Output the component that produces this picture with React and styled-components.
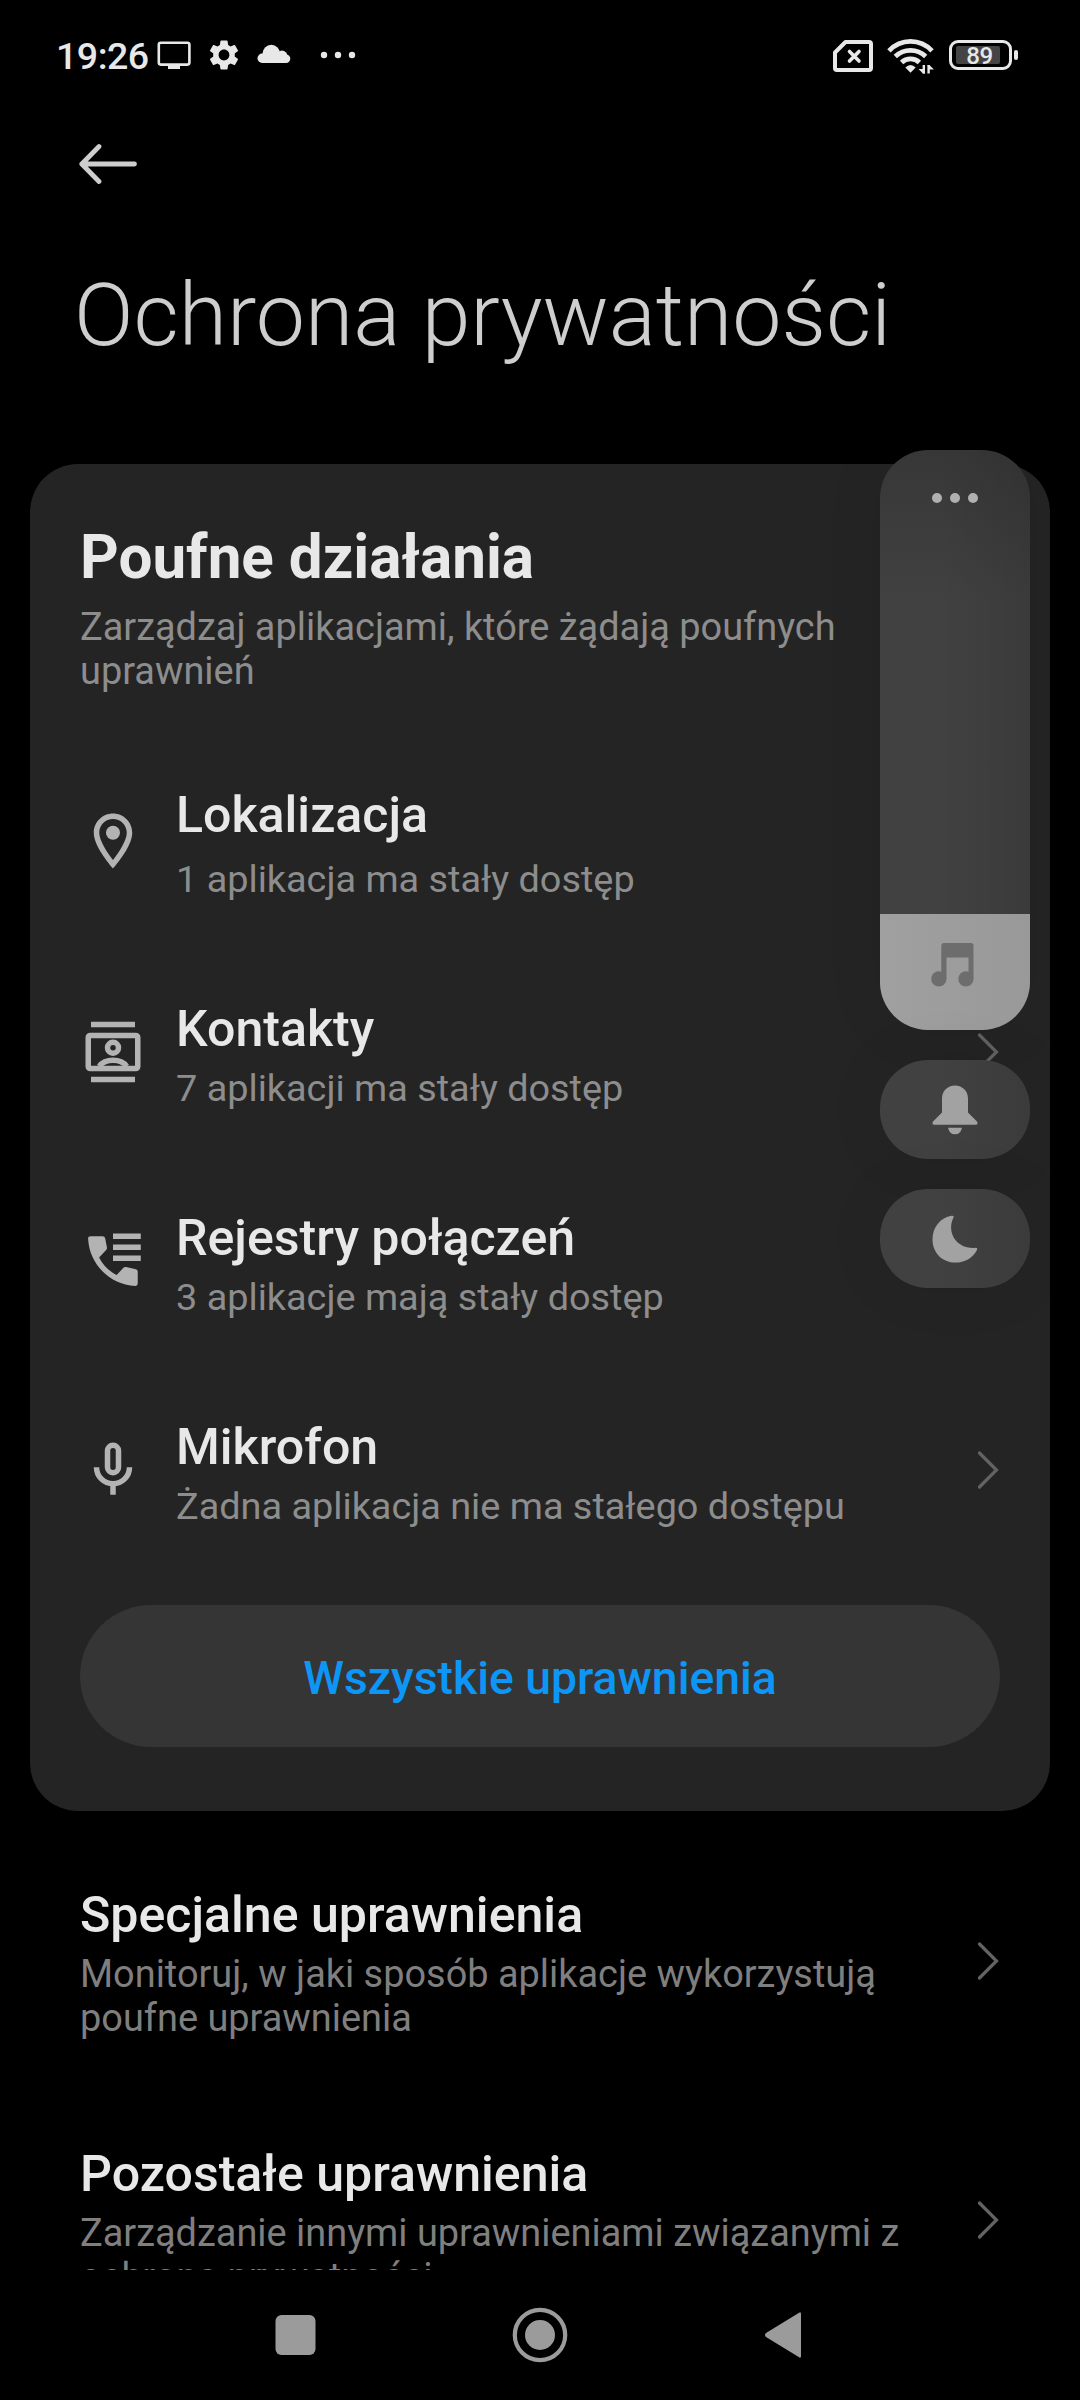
import React from 'react'
import styled, { createGlobalStyle } from 'styled-components'
import { MdSettings } from 'react-icons/md'


const rows = [
  { icon: 'pin', title: 'Lokalizacja', text: '1 aplikacja ma stały dostęp', first: true },
  { icon: 'contacts', title: 'Kontakty', text: '7 aplikacji ma stały dostęp' },
  { icon: 'calls', title: 'Rejestry połączeń', text: '3 aplikacje mają stały dostęp' },
  { icon: 'mic', title: 'Mikrofon', text: 'Żadna aplikacja nie ma stałego dostępu' },
]

const icons = {
  pin: (
    <>
      <path d="M12 2C8.13 2 5 5.13 5 9c0 5.25 7 13 7 13s7-7.75 7-13c0-3.87-3.13-7-7-7zM7 9c0-2.76 2.24-5 5-5s5 2.24 5 5c0 2.88-2.88 7.19-5 9.88C9.92 16.21 7 11.85 7 9z" />
      <circle cx="12" cy="9" r="2.55" />
    </>
  ),
  contacts: (
    <>
      <path d="M4 1h16v2H4zM4 21h16v2H4z" />
      <rect x="3" y="6" width="18" height="12" rx="0.7" fill="none" stroke="currentColor" strokeWidth="2" />
      <circle cx="12" cy="10.45" r="2" fill="none" stroke="currentColor" strokeWidth="2" />
      <path d="M7 17.2C8.2 15.6 10 15 12 15s3.8.6 5 2.2" fill="none" stroke="currentColor" strokeWidth="2" />
    </>
  ),
  calls: (
    <>
      <path d="M12 2h10.1v2H12zM12 6h10.1v2H12zM12 10h10.1v2H12z" />
      <path d="M3.9 3H8.2Q9 3 9.15 3.7L9.8 7.1Q9.9 7.6 9.5 8L6.95 10.7Q9.1 14.9 13.3 17.1L15.9 14.4Q16.3 14.1 16.8 14.2L20.3 15Q21 15.1 21 15.9V20.1Q21 21.1 20.1 21.05C10.8 20.6 3.4 13.2 2.95 3.95Q2.9 3 3.9 3Z" />
    </>
  ),
  mic: (
    <g fill="none" stroke="currentColor" strokeWidth="2">
      <rect x="10" y="3" width="4" height="10" rx="2" />
      <path d="M6 11a6 6 0 0 0 12 0M12 17v4" />
    </g>
  ),
}

function Chevron() {
  return (
    <ChevronIcon viewBox="0 0 22 38">
      <path d="M1.5 2L18.5 19L1.5 36" fill="none" stroke="currentColor" strokeWidth="3.2" strokeLinecap="round" />
    </ChevronIcon>
  )
}

export default function App() {
  return (
    <Screen>
      <GlobalStyle />

      <StatusBar>
        <Clock>19:26</Clock>
        <LeftIcons viewBox="0 0 200 40" fill="currentColor">
          <rect x="2.8" y="7.8" width="30.6" height="21.8" rx="2" fill="none" stroke="currentColor" strokeWidth="2.6" />
          <path d="M12 30h12v4H12z" />
          <MdSettings x="50" y="2" size={36} />
          <circle cx="115.3" cy="18.6" r="8.8" />
          <circle cx="126" cy="21" r="5.4" />
          <rect x="101.5" y="18.6" width="12" height="9.4" rx="4.7" />
          <rect x="104" y="19.5" width="30.3" height="8.5" rx="4.2" />
          <circle cx="168" cy="20" r="3.2" />
          <circle cx="182" cy="20" r="3.2" />
          <circle cx="196" cy="20" r="3.2" />
        </LeftIcons>

        <RightIcons>
          <svg width="40" height="32" viewBox="0 0 40 32" fill="none" stroke="currentColor">
            <path d="M12.5 2H36Q38 2 38 4V28Q38 30 36 30H4Q2 30 2 28V12.5Z" strokeWidth="4" strokeLinejoin="round" />
            <path d="M16.5 11.5l9.5 9.5M26 11.5l-9.5 9.5" strokeWidth="3.6" strokeLinecap="round" />
          </svg>
          <svg width="47" height="36" viewBox="0 0 47 36" fill="none" stroke="currentColor">
            <path d="M2 12.8C14 .3 33 .3 45 12.8M8.3 18.6C17 10.4 30 10.4 38.7 18.6M14.6 24.4C19.5 19.8 27.5 19.8 32.4 24.4" strokeWidth="4.8" />
            <path d="M23.5 34.8l-5.2-5.3q5.2-5 10.4 0z" fill="currentColor" stroke="none" />
            <path d="M36.8 27v8.5M41.6 27v8.5" strokeWidth="2.4" />
            <path d="M38 35.5h-2l-4.5-4.5h4.5zM40.4 27h2l4.5 4.5h-4.5z" fill="currentColor" stroke="none" />
          </svg>
          <Battery>
            <Level>89</Level>
          </Battery>
          <BatteryTip />
        </RightIcons>
      </StatusBar>

      <TopBar>
        <svg width="58" height="42" viewBox="0 0 58 42" fill="none" stroke="currentColor" strokeWidth="4.8" strokeLinecap="round" strokeLinejoin="round">
          <path d="M55.5 21H3M20 3.5L2.8 21L20 38.5" />
        </svg>
      </TopBar>
      <PageTitle>Ochrona prywatności</PageTitle>

      <Content>
        <Card>
          <CardTitle>Poufne działania</CardTitle>
          <CardText>Zarządzaj aplikacjami, które żądają poufnych uprawnień</CardText>

          {rows.map((r) => (
            <Row key={r.title} $first={r.first}>
              <RowIcon viewBox="0 0 24 24">{icons[r.icon]}</RowIcon>
              <Texts $first={r.first}>
                <RowTitle>{r.title}</RowTitle>
                <RowText>{r.text}</RowText>
              </Texts>
              <Chevron />
            </Row>
          ))}

          <AllButton>Wszystkie uprawnienia</AllButton>
        </Card>

        <Item>
          <Texts $first={false}>
            <RowTitle>Specjalne uprawnienia</RowTitle>
            <RowText $dim>Monitoruj, w jaki sposób aplikacje wykorzystują<br />poufne uprawnienia</RowText>
          </Texts>
          <Chevron />
        </Item>
        <Item>
          <Texts $first={false}>
            <RowTitle>Pozostałe uprawnienia</RowTitle>
            <RowText $dim>Zarządzanie innymi uprawnieniami związanymi z<br />ochroną prywatności</RowText>
          </Texts>
          <Chevron />
        </Item>
      </Content>

      <NavBar>
        <svg width="42" height="42" viewBox="0 0 42 42"><rect x="1.5" y="1" width="40" height="40" rx="6" /></svg>
        <svg width="56" height="56" viewBox="0 0 56 56">
          <circle cx="28" cy="28" r="25.2" fill="none" stroke="currentColor" strokeWidth="4.2" />
          <circle cx="28" cy="28" r="15" />
        </svg>
        <svg width="38" height="48" viewBox="0 0 38 48">
          <path d="M35.5 1.5Q37 .5 37 3V45Q37 47.5 35.5 46.5L2 26Q0 24 2 22Z" />
        </svg>
      </NavBar>

      {/* volume overlay */}
      <VolumePanel>
        <Slider>
          <Dots><i /><i /><i /></Dots>
          <Filled>
            <svg width="44" height="44" viewBox="0 0 44 44">
              <path d="M12.5 0H40Q42.5 0 42.5 2.5V36H37.5V14.5H15.5V36H10.3V2.5Q10.3 0 12.5 0Z" />
              <circle cx="7.8" cy="35.9" r="7.6" />
              <circle cx="34.9" cy="35.9" r="7.6" />
            </svg>
          </Filled>
        </Slider>
        <Pill>
          <svg width="46" height="50" viewBox="0 0 46 50">
            <path d="M23 .5C30.5 .5 36 6 36 13.5V27.5L45 36.5Q46.5 39.5 44 39.8H2Q-.5 39.5 1 36.5L10 27.5V13.5C10 6 15.5 .5 23 .5Z" />
            <path d="M16 42.7H30Q28.5 49.3 23 49.3T16 42.7Z" />
          </svg>
        </Pill>
        <Pill>
          <svg width="46" height="48" viewBox="0 0 46 48">
            <path d="M19.5 .7Q22.5 .3 21.3 3C14.5 17 24 33.5 42 33Q46 31.7 45 35C40.5 43.5 32.5 47.6 23.5 47.6C10 47.6 .5 37.5 .5 24.5C.5 12 8.5 2.5 19.5 .7Z" />
          </svg>
        </Pill>
      </VolumePanel>
    </Screen>
  )
}


const GlobalStyle = createGlobalStyle`
  body {
    margin: 0;
    background: #000;
  }
  * {
    box-sizing: border-box;
  }
`

const Screen = styled.div`
  position: relative;
  display: flex;
  flex-direction: column;
  width: 1080px;
  height: 2400px;
  overflow: hidden;
  background: #000;
  color: #e8e8e8;
  font-family: Roboto, "Noto Sans", sans-serif;
`

const StatusBar = styled.header`
  display: flex;
  align-items: center;
  height: 110px;
  padding: 0 62px 0 56px;
`

const Clock = styled.span`
  width: 100px;
  padding-top: 2px;
  font-size: 37.5px;
  font-weight: 500;
  letter-spacing: -0.5px;
  line-height: 44px;
  white-space: nowrap;
`

const LeftIcons = styled.svg`
  width: 200px;
  height: 40px;
`

const RightIcons = styled.div`
  display: flex;
  align-items: center;
  margin-left: auto;
  padding-top: 2px;

  svg:first-child {
    margin-right: 14px;
  }
`

const Battery = styled.div`
  width: 63px;
  height: 30px;
  margin: -2px 2px 0 15px;
  padding: 3px 4px;
  border: 3px solid #e8e8e8;
  border-radius: 9px;
`

const Level = styled.div`
  width: 44px;
  height: 18px;
  padding-left: 3px;
  border-radius: 2px;
  background: #444;
  font-size: 24px;
  font-weight: 500;
  letter-spacing: -0.5px;
  line-height: 20px;
  text-align: center;
`

const BatteryTip = styled.div`
  width: 4px;
  height: 10px;
  margin-top: -2px;
  border-radius: 2px;
  background: #e8e8e8;
`

const TopBar = styled.div`
  display: flex;
  align-items: center;
  height: 108px;
  padding: 0 79px;
  color: #cecece;
`

const PageTitle = styled.h1`
  height: 246px;
  margin: 0;
  padding: 44px 0 0 74px;
  color: #cecece;
  font-size: 87.8px;
  font-weight: 300;
  line-height: 106px;
  white-space: nowrap;
`

const Content = styled.main`
  flex: 1;
  min-height: 0;
  overflow: hidden;
`

const Card = styled.section`
  height: 1347px;
  margin: 0 30px 20px;
  padding: 59px 50px 0;
  border-radius: 48px;
  background: #242424;
`

const CardTitle = styled.h2`
  margin: 0;
  font-size: 60.2px;
  font-weight: 700;
  line-height: 70px;
`

const CardText = styled.p`
  width: 780px;
  height: 142px;
  margin: 0;
  padding-top: 12px;
  color: #8d8d8d;
  font-size: 37.92px;
  line-height: 44px;
`

const Row = styled.div`
  display: flex;
  align-items: center;
  height: ${(p) => (p.$first ? '212px' : '209px')};
`

const RowIcon = styled.svg`
  width: 66px;
  height: 66px;
  margin-right: 30px;
  color: #b3b3b3;
  fill: currentColor;
`

const Texts = styled.div`
  flex: 1;
  display: flex;
  flex-direction: column;
  gap: ${(p) => (p.$first ? '12px' : '7px')};
  padding-top: ${(p) => (p.$first ? '5px' : '7px')};
`

const RowTitle = styled.div`
  font-size: 50.1px;
  font-weight: 500;
  line-height: 59px;
  white-space: nowrap;
`

const RowText = styled.div`
  color: ${(p) => (p.$dim ? '#7f7f7f' : '#8d8d8d')};
  font-size: ${(p) => (p.$dim ? '37.92px' : '37.85px')};
  line-height: 44px;
  white-space: nowrap;
`

const ChevronIcon = styled.svg`
  width: 22px;
  height: 38px;
  color: #636363;
`

const AllButton = styled.button`
  display: block;
  width: 920px;
  height: 142px;
  margin: 31px 0 0;
  padding: 4px 0 0;
  border: 0;
  border-radius: 71px;
  background: #353535;
  color: #0d96f5;
  font-family: inherit;
  font-size: 46.3px;
  font-weight: 500;
`

const Item = styled.div`
  display: flex;
  align-items: center;
  height: 259px;
  padding: 0 80px;

  ${Texts} {
    padding-top: 5px;
  }
`

const NavBar = styled.nav`
  display: flex;
  align-items: center;
  justify-content: space-between;
  height: 130px;
  padding: 0 278px 0 274px;
  color: #9b9b9b;

  svg {
    fill: currentColor;
  }
`

const VolumePanel = styled.aside`
  position: absolute;
  top: 450px;
  left: 880px;
  display: flex;
  flex-direction: column;
  gap: 30px;
  width: 150px;
`

const Slider = styled.div`
  display: flex;
  flex-direction: column;
  justify-content: space-between;
  height: 580px;
  overflow: hidden;
  border-radius: 48px;
  background: linear-gradient(to right, transparent 40%, rgba(0, 0, 0, 0.1)),
    linear-gradient(#373737, #414141 150px);
  box-shadow: 0 0 60px rgba(0, 0, 0, 0.08);
`

const Dots = styled.div`
  display: flex;
  justify-content: center;
  gap: 8px;
  padding-top: 43px;

  i {
    width: 10px;
    height: 10px;
    border-radius: 50%;
    background: #b0b0b0;
  }
`

const Filled = styled.div`
  height: 116px;
  padding: 29px 0 0 51px;
  background: linear-gradient(to right, #a0a0a0, #999);

  svg {
    fill: #6d6d6d;
  }
`

const Pill = styled.div`
  display: flex;
  align-items: center;
  justify-content: center;
  height: 99px;
  padding-right: 1px;
  border-radius: 48px;
  background: linear-gradient(to right, #414141 40%, #3b3b3b);
  box-shadow: 0 0 60px rgba(0, 0, 0, 0.08);

  svg {
    fill: #a2a2a2;
  }
`
